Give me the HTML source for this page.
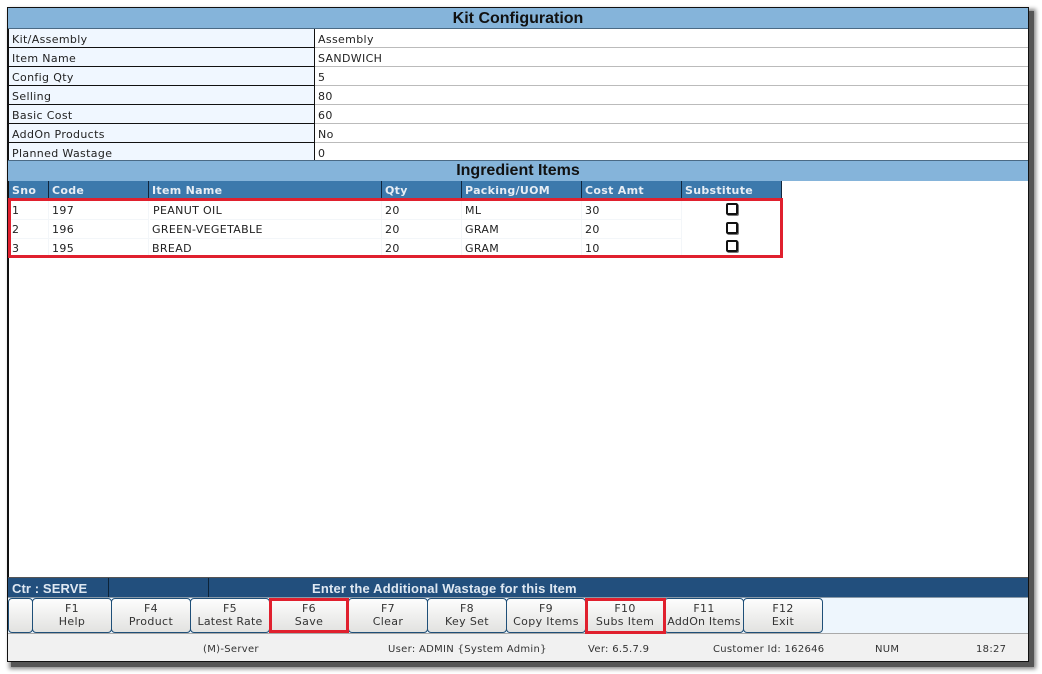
<!DOCTYPE html>
<html><head><meta charset="utf-8">
<style>
html,body{margin:0;padding:0;background:#fff;}
body{width:1042px;height:674px;overflow:hidden;position:relative;font-family:"DejaVu Sans","Liberation Sans",sans-serif;font-size:11px;color:#222;letter-spacing:.35px;}
div{position:absolute;box-sizing:border-box;white-space:nowrap;}
.shadow{left:11px;top:11px;width:1023px;height:656px;background:#555;box-shadow:0 0 4px 2px #888;}
.win{left:7px;top:7px;width:1022px;height:655px;background:#fff;border:1px solid #111;box-shadow:inset 1px 0 0 #111;}
.bar{left:8px;width:1020px;background:#85b4da;text-align:center;font:bold 16px/20px "Liberation Sans",sans-serif;color:#111;letter-spacing:0;}
.lab{left:9px;width:305px;height:19px;background:#f0f7ff;border-bottom:1px solid #111;line-height:21px;padding-left:3px;}
.val{left:315px;width:713px;height:19px;background:#fff;border-bottom:1px solid #bbb;line-height:21px;padding-left:3px;}
.vd{left:314px;top:29px;width:1px;height:132px;background:#111;}
.hd{top:181px;height:18px;background:#3c79ac;color:#e8eef5;font-weight:bold;line-height:19px;letter-spacing:.3px;padding-left:3px;border-right:1px solid #11263c;}
.c{line-height:19px;height:19px;padding-left:3px;border-right:1px solid #f3f6f9;border-bottom:1px solid #f3f6f9;}
.cb{width:12px;height:12px;border:2px solid #111;border-radius:2px;background:#fff;box-shadow:1px 1px 0 #777;left:726px;}
.red{border:3px solid #e0202e;background:transparent;}
.btn{top:598px;height:35px;width:80px;border:1px solid #1f4f78;border-radius:4px;background:linear-gradient(#fdfdfd,#e2e2e0);text-align:center;line-height:13px;padding-top:3px;color:#333;letter-spacing:.35px;}
.st{top:643px;color:#333;font-size:10px;line-height:13px;letter-spacing:.3px;}
</style></head><body>
<div class="shadow"></div>
<div class="win"></div>
<div class="bar" style="top:8px;height:21px;border-bottom:1px solid #4a6a85;line-height:22px;">Kit Configuration</div>

<div class="lab" style="top:29px">Kit/Assembly</div><div class="val" style="top:29px">Assembly</div>
<div class="lab" style="top:48px">Item Name</div><div class="val" style="top:48px">SANDWICH</div>
<div class="lab" style="top:67px">Config Qty</div><div class="val" style="top:67px">5</div>
<div class="lab" style="top:86px">Selling</div><div class="val" style="top:86px">80</div>
<div class="lab" style="top:105px">Basic Cost</div><div class="val" style="top:105px">60</div>
<div class="lab" style="top:124px">AddOn Products</div><div class="val" style="top:124px">No</div>
<div class="lab" style="top:143px;height:18px;border:0">Planned Wastage</div><div class="val" style="top:143px;height:18px;border:0">0</div>
<div class="vd"></div>

<div class="bar" style="top:160px;height:21px;border-top:1px solid #4a6a85;">Ingredient Items</div>

<div class="hd" style="left:9px;width:40px">Sno</div>
<div class="hd" style="left:49px;width:100px">Code</div>
<div class="hd" style="left:149px;width:233px">Item Name</div>
<div class="hd" style="left:382px;width:80px">Qty</div>
<div class="hd" style="left:462px;width:120px">Packing/UOM</div>
<div class="hd" style="left:582px;width:100px">Cost Amt</div>
<div class="hd" style="left:682px;width:100px">Substitute</div>

<div class="c" style="left:9px;top:201px;width:40px">1</div><div class="c" style="left:49px;top:201px;width:100px">197</div><div class="c" style="left:150px;top:201px;width:232px">PEANUT OIL</div><div class="c" style="left:382px;top:201px;width:80px">20</div><div class="c" style="left:462px;top:201px;width:120px">ML</div><div class="c" style="left:582px;top:201px;width:100px">30</div>
<div class="c" style="left:9px;top:220px;width:40px">2</div><div class="c" style="left:49px;top:220px;width:100px">196</div><div class="c" style="left:149px;top:220px;width:233px">GREEN-VEGETABLE</div><div class="c" style="left:382px;top:220px;width:80px">20</div><div class="c" style="left:462px;top:220px;width:120px">GRAM</div><div class="c" style="left:582px;top:220px;width:100px">20</div>
<div class="c" style="left:9px;top:239px;width:40px;border-bottom:0">3</div><div class="c" style="left:49px;top:239px;width:100px;border-bottom:0">195</div><div class="c" style="left:149px;top:239px;width:233px;border-bottom:0">BREAD</div><div class="c" style="left:382px;top:239px;width:80px;border-bottom:0">20</div><div class="c" style="left:462px;top:239px;width:120px;border-bottom:0">GRAM</div><div class="c" style="left:582px;top:239px;width:100px;border-bottom:0">10</div>
<div class="cb" style="top:203px"></div>
<div class="cb" style="top:222px"></div>
<div class="cb" style="top:240px"></div>
<div class="red" style="left:8px;top:198px;width:775px;height:60px;"></div>

<div style="left:8px;top:577px;width:1020px;height:21px;background:#224f7d;border-top:1px solid #555;border-bottom:1px solid #8a9aa8;"></div>
<div style="left:108px;top:578px;width:1px;height:19px;background:#0c2338;"></div>
<div style="left:208px;top:578px;width:1px;height:19px;background:#0c2338;"></div>
<div style="left:12px;top:580px;color:#dfe8f2;font:bold 13px/17px 'Liberation Sans',sans-serif;letter-spacing:.1px;">Ctr : SERVE</div>
<div style="left:312px;top:580px;color:#dfe8f2;font:bold 13px/17px 'Liberation Sans',sans-serif;letter-spacing:.17px;">Enter the Additional Wastage for this Item</div>

<div style="left:8px;top:598px;width:1020px;height:36px;background:#eef6fd;border-bottom:1px solid #aaa;"></div>
<div class="btn" style="left:8px;width:25px"></div>
<div class="btn" style="left:32px">F1<br>Help</div>
<div class="btn" style="left:111px">F4<br>Product</div>
<div class="btn" style="left:190px"><span>F5</span><br><span style="letter-spacing:.2px">Latest Rate</span></div>
<div class="btn" style="left:269px">F6<br>Save</div>
<div class="btn" style="left:348px">F7<br>Clear</div>
<div class="btn" style="left:427px">F8<br>Key Set</div>
<div class="btn" style="left:506px">F9<br>Copy Items</div>
<div class="btn" style="left:585px">F10<br>Subs Item</div>
<div class="btn" style="left:664px">F11<br><span style="letter-spacing:.2px">AddOn Items</span></div>
<div class="btn" style="left:743px">F12<br>Exit</div>
<div class="red" style="left:269px;top:598px;width:80px;height:35px;"></div>
<div class="red" style="left:585px;top:598px;width:81px;height:36px;"></div>

<div style="left:8px;top:634px;width:1020px;height:27px;background:#f1f1f1;"></div>
<div class="st" style="left:203px">(M)-Server</div>
<div class="st" style="left:388px">User: ADMIN {System Admin}</div>
<div class="st" style="left:588px">Ver: 6.5.7.9</div>
<div class="st" style="left:713px">Customer Id: 162646</div>
<div class="st" style="left:875px">NUM</div>
<div class="st" style="left:976px">18:27</div>
</body></html>
